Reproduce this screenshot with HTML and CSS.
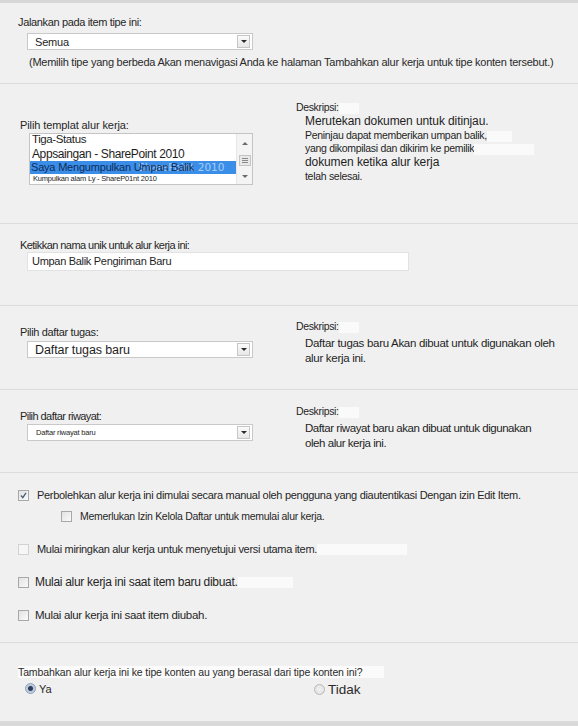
FILE: index.html
```html
<!DOCTYPE html>
<html lang="id">
<head>
<meta charset="utf-8">
<title>Tambahkan alur kerja</title>
<link rel="stylesheet" href="styles.css">
</head>
<body>
<div class="page">

  <section class="sec s1">
    <div class="label">Jalankan pada item tipe ini:</div>
    <div class="select sel-main">
      <span class="sel-text">Semua</span>
      <span class="arrow-btn"><span class="tri"></span></span>
    </div>
    <div class="note">(Memilih tipe yang berbeda Akan menavigasi Anda ke halaman Tambahkan alur kerja untuk tipe konten tersebut.)</div>
  </section>

  <section class="sec s2 two-col">
    <div class="left">
      <div class="label">Pilih templat alur kerja:</div>
      <div class="listbox">
        <div class="items">
          <div class="item i1">Tiga-Status</div>
          <div class="item i2">Appsaingan - SharePoint 2010</div>
          <div class="item i3 selected"><span class="ghost">SharePoint 2010</span><span class="sel-label">Saya Mengumpulkan Umpan Balik</span></div>
          <div class="item i4">Kumpulkan alam Ly - ShareP01nt 2010</div>
        </div>
        <div class="scrollbar">
          <span class="sb-up"></span>
          <span class="sb-thumb"><i></i><i></i><i></i></span>
          <span class="sb-down"></span>
        </div>
      </div>
    </div>
    <div class="right">
      <div class="desc-label">Deskripsi:<span class="wp w20"></span></div>
      <div class="desc">
        <div class="d-big">Merutekan dokumen untuk ditinjau.</div>
        <div class="d-sm">Peninjau dapat memberikan umpan balik,<span class="wp w25"></span></div>
        <div class="d-sm">yang dikompilasi dan dikirim ke pemilik<span class="wp w60"></span></div>
        <div class="d-big">dokumen ketika alur kerja</div>
        <div class="d-sm">telah selesai.</div>
      </div>
    </div>
  </section>

  <section class="sec s3">
    <div class="label">Ketikkan nama unik untuk alur kerja ini:</div>
    <div class="textbox">Umpan Balik Pengiriman Baru</div>
  </section>

  <section class="sec s4 two-col">
    <div class="left">
      <div class="label">Pilih daftar tugas:</div>
      <div class="select">
        <span class="sel-text big">Daftar tugas baru</span>
        <span class="arrow-btn"><span class="tri"></span></span>
      </div>
    </div>
    <div class="right">
      <div class="desc-label">Deskripsi:<span class="wp w20"></span></div>
      <div class="desc">
        <div class="d-mid">Daftar tugas baru Akan dibuat untuk digunakan oleh</div>
        <div class="d-mid">alur kerja ini.</div>
      </div>
    </div>
  </section>

  <section class="sec s5 two-col">
    <div class="left">
      <div class="label">Pilih daftar riwayat:</div>
      <div class="select">
        <span class="sel-text tiny">Daftar riwayat baru</span>
        <span class="arrow-btn"><span class="tri"></span></span>
      </div>
    </div>
    <div class="right">
      <div class="desc-label">Deskripsi:<span class="wp w20"></span></div>
      <div class="desc d-narrow">
        <div class="d-mid">Daftar riwayat baru akan dibuat untuk digunakan</div>
        <div class="d-mid">oleh alur kerja ini.</div>
      </div>
    </div>
  </section>

  <section class="sec s6">
    <div class="check-row r1">
      <span class="cb checked"><svg viewBox="0 0 9 9" width="9" height="9"><path d="M2 4.5 L3.8 6.6 L7 1.8" fill="none" stroke="#4a5a7a" stroke-width="1.3"/></svg></span>
      <span class="ct">Perbolehkan alur kerja ini dimulai secara manual oleh pengguna yang diautentikasi Dengan izin Edit Item.</span>
    </div>
    <div class="check-row sub">
      <span class="cb"></span>
      <span class="ct">Memerlukan Izin Kelola Daftar untuk memulai alur kerja.</span>
    </div>
    <div class="check-row r3">
      <span class="cb faint"></span>
      <span class="ct">Mulai miringkan alur kerja untuk menyetujui versi utama item.<span class="wp w90"></span></span>
    </div>
    <div class="check-row r4">
      <span class="cb"></span>
      <span class="ct">Mulai alur kerja ini saat item baru dibuat.<span class="wp w55"></span></span>
    </div>
    <div class="check-row r5">
      <span class="cb"></span>
      <span class="ct">Mulai alur kerja ini saat item diubah.</span>
    </div>
  </section>

  <section class="sec s7">
    <div class="q"><span class="q-text">Tambahkan alur kerja ini ke tipe konten au yang berasal dari tipe konten ini?</span></div>
    <div class="radios">
      <label class="radio-item ya"><span class="rb on"></span><span>Ya</span></label>
      <label class="radio-item tidak"><span class="rb"></span><span>Tidak</span></label>
    </div>
  </section>

</div>
</body>
</html>
```

FILE: styles.css
```css
* { box-sizing: border-box; }
html, body { margin: 0; padding: 0; }
body {
  background: #f0f0f0;
  font-family: "Liberation Sans", Arial, sans-serif;
  color: #2a2a2a;
  font-size: 11px;
}
.page {
  width: 578px;
  height: 726px;
  border-top: 3px solid #d7d7d7;
  border-bottom: 4px solid #d9d9d9;
  background: #f0f0f0;
}
.sec {
  border-bottom: 1px solid #dcdcdc;
  padding-left: 18px;
}
.s1 { height: 81px; padding-top: 13px; }
.s2 { height: 140px; }
.s3 { height: 82px; padding-top: 15px; padding-left: 20px; }
.s4 { height: 84px; }
.s5 { height: 83px; }
.s6 { height: 170px; padding-top: 15px; }
.s7 { height: 79px; padding-top: 23px; }

.label {
  font-size: 11px;
  letter-spacing: -0.35px;
  line-height: 13px;
  color: #262626;
}
.s3 .label { letter-spacing: -0.55px; }
.s2 .label { letter-spacing: -0.1px; }
.s5 .label { letter-spacing: -0.55px; }

/* select */
.select {
  margin: 3px 0 0 9px;
  width: 226px;
  height: 17px;
  background: #fff;
  border: 1px solid #c9c9c9;
  display: flex;
  align-items: center;
  justify-content: space-between;
  padding: 0 2px 0 7px;
}
.sel-main { margin-top: 4px; }
.sel-text { font-size: 11px; letter-spacing: -0.2px; color: #1e1e1e; }
.sel-text.big { font-size: 12.5px; letter-spacing: -0.1px; }
.sel-text.tiny { font-size: 7.5px; letter-spacing: -0.2px; padding-left: 1px; }
.arrow-btn {
  width: 13px;
  height: 13px;
  border: 1px solid #c6c6c6;
  background: linear-gradient(#fbfbfb, #e7e7e7);
  display: flex;
  align-items: center;
  justify-content: center;
}
.tri {
  width: 0; height: 0;
  border-left: 3px solid transparent;
  border-right: 3px solid transparent;
  border-top: 3px solid #2b2b2b;
}
.note {
  margin: 6px 0 0 11px;
  font-size: 11px;
  letter-spacing: -0.25px;
  color: #2a2a2a;
  white-space: nowrap;
}

/* two column sections */
.two-col {
  display: grid;
  grid-template-columns: 278px 1fr;
}
.s2 .left { padding-top: 35px; padding-left: 2px; }
.s2 .right { padding-top: 17px; }
.s4 .left { padding-top: 20px; padding-left: 2px; }
.s4 .right { padding-top: 14px; }
.s5 .left { padding-top: 20px; padding-left: 2px; }
.s5 .right { padding-top: 15px; }
.s4 .select, .s5 .select { margin-left: 7px; margin-top: 2px; }
.s5 .select { margin-top: 1px; }

.desc-label {
  font-size: 10.5px;
  letter-spacing: -0.35px;
  line-height: 13px;
  color: #262626;
}
.desc { padding-left: 9px; color: #1f1f1f; }
.d-big { font-size: 12px; line-height: 15px; letter-spacing: -0.1px; }
.d-sm { font-size: 10.5px; line-height: 13px; letter-spacing: -0.3px; }
.d-mid { font-size: 11.5px; line-height: 15px; letter-spacing: -0.3px; }
.d-narrow .d-mid { letter-spacing: -0.45px; }
.s4 .desc, .s5 .desc { margin-top: 3px; }

.wp { display: inline-block; height: 11px; background: #fafafa; vertical-align: middle; }
.w20 { width: 20px; }
.w25 { width: 25px; }
.w55 { width: 55px; }
.w60 { width: 60px; }
.w90 { width: 90px; }

/* listbox */
.listbox {
  margin: 1px 0 0 9px;
  width: 224px;
  height: 52px;
  background: #fff;
  border: 1px solid #c4c4c4;
  display: flex;
}
.items { flex: 1; overflow: hidden; }
.item { white-space: nowrap; color: #1e1e1e; }
.i1 { font-size: 11.5px; line-height: 11px; height: 11px; padding-left: 2px; letter-spacing: -0.4px; }
.i2 { font-size: 12px; line-height: 15px; height: 16px; padding-left: 2px; padding-top: 2px; letter-spacing: -0.4px; }
.i3 {
  position: relative;
  height: 13px;
  font-size: 11px;
  line-height: 13px;
  letter-spacing: -0.2px;
  background: #3b8ee8;
  padding-left: 1px;
}
.sel-label { position: relative; color: #0f2c58; }
.ghost {
  position: absolute;
  left: 108px;
  top: 0;
  font-family: "DejaVu Sans", sans-serif;
  font-size: 10.5px;
  line-height: 13px;
  color: #a8cdf3;
  letter-spacing: 0;
}
.i4 { font-size: 7.5px; line-height: 10px; height: 10px; padding-left: 3px; letter-spacing: -0.2px; }
.scrollbar {
  width: 16px;
  border-left: 1px solid #e6e6e6;
  background: #f4f4f4;
  display: flex;
  flex-direction: column;
  align-items: center;
  justify-content: space-between;
  padding: 8px 0 6px;
}
.sb-up {
  width: 0; height: 0;
  border-left: 3px solid transparent;
  border-right: 3px solid transparent;
  border-bottom: 3px solid #6a6a6a;
}
.sb-down {
  width: 0; height: 0;
  border-left: 3px solid transparent;
  border-right: 3px solid transparent;
  border-top: 3px solid #6a6a6a;
}
.sb-thumb {
  width: 12px;
  height: 11px;
  border: 1px solid #c5c5c5;
  background: #e8e8e8;
  display: flex;
  flex-direction: column;
  justify-content: center;
  align-items: center;
  gap: 1px;
}
.sb-thumb i { display: block; width: 6px; height: 1px; background: #8a8a8a; }

/* textbox */
.textbox {
  margin: 0 0 0 7px;
  width: 382px;
  height: 19px;
  background: #fff;
  border: 1px solid #e2e2e2;
  font-size: 11px;
  letter-spacing: -0.3px;
  padding: 2px 0 0 4px;
  color: #1e1e1e;
}

/* checkboxes */
.check-row {
  display: flex;
  align-items: center;
  height: 14px;
}
.check-row.sub { margin-top: 7px; padding-left: 43px; }
.check-row.r3 { margin-top: 19px; }
.check-row.r4 { margin-top: 19px; }
.check-row.r5 { margin-top: 19px; }
.cb {
  width: 11px;
  height: 11px;
  border: 1px solid #a8a8a8;
  background: linear-gradient(135deg, #e2e2e2, #fafafa);
  display: inline-flex;
  align-items: center;
  justify-content: center;
  flex: none;
}
.cb.faint { border-color: #d2d2d2; background: #f6f6f6; }
.ct {
  margin-left: 8px;
  font-size: 11px;
  letter-spacing: -0.3px;
  color: #262626;
  white-space: nowrap;
}
.sub .ct { font-size: 10.5px; letter-spacing: -0.3px; }
.r4 .ct { font-size: 12px; letter-spacing: -0.3px; margin-left: 6px; }
.r5 .ct { font-size: 11.5px; letter-spacing: -0.3px; margin-left: 6px; }

/* radios */
.q { font-size: 10.5px; letter-spacing: -0.12px; }
.q-text { background: #fbfbfb; padding-right: 22px; }
.radios { display: flex; margin-top: 2px; padding-left: 7px; }
.radio-item { display: flex; align-items: center; gap: 3px; }
.radio-item.ya { width: 289px; font-size: 11px; }
.radio-item.tidak { font-size: 13.5px; margin-top: 2px; }
.rb {
  width: 11px;
  height: 11px;
  border-radius: 50%;
  border: 1px solid #b9b9b9;
  background: radial-gradient(circle, #f2f2f2 0, #dcdcdc 100%);
  display: inline-block;
}
.rb.on {
  border-color: #8aa0b8;
  background: radial-gradient(circle, #2c3e5c 0, #2c3e5c 2px, #b7c6d8 3px, #d9e2ec 100%);
}
```
